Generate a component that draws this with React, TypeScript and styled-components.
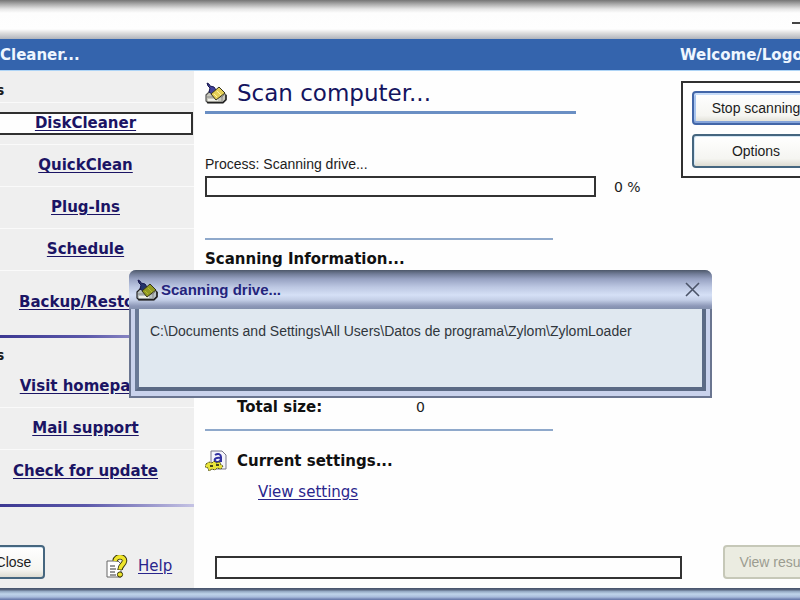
import React from "react";
import styled, { createGlobalStyle } from "styled-components";

const verdana = `"DejaVu Sans", sans-serif`;
const plain = `"Liberation Sans", sans-serif`;

const GlobalStyle = createGlobalStyle`
  *, *::before, *::after { box-sizing: border-box; }
  body { margin: 0; background: #fefefe; overflow: hidden; }
`;

const Viewport = styled.div`
  position: relative;
  min-height: 100vh;
  overflow: hidden;
  color: #1c1c1c;
  font: 14px/20px ${plain};
`;

const Shell = styled.div`
  display: flex;
  flex-direction: column;
  min-height: 100vh;
  margin: 0 -31px 0 -22px;
`;

const Caption = styled.header`
  display: flex;
  justify-content: flex-end;
  height: 39px;
  padding: 10px 22px;
  background: linear-gradient(#757575 0, #a9a9a9 4px, #e6e6e6 9px, #fdfdfd 13px, #fefefe 29px, #dedede 33px, #b0b4bc 39px);
`;

const CaptionButton = styled.button`
  display: flex;
  align-items: center;
  width: 17px;
  height: 26px;
  padding: 0;
  border: 0;
  background: none;
`;

const Banner = styled.div`
  display: flex;
  justify-content: space-between;
  align-items: center;
  height: 32px;
  padding: 0 0 0 22px;
  border-bottom: 1px solid #aed4f6;
  background: #3464ad;
  color: #eef6ff;
  font: bold 15px/20px ${verdana};
`;

const BannerLink = styled.span`
  width: 151px;
  white-space: nowrap;
`;

const Body = styled.div`
  flex: 1;
  display: flex;
`;

const Sidebar = styled.nav`
  display: flex;
  flex-direction: column;
  width: 216px;
  flex-shrink: 0;
  background: #efefef;
`;

const GroupTitle = styled.h2<{ $line?: boolean }>`
  display: flex;
  align-items: center;
  height: ${(p) => (p.$line ? 32 : 28)}px;
  margin: 0;
  padding: 6px 0 0 18px;
  border-bottom: ${(p) => (p.$line ? "1px solid #fafafa" : "0")};
  font: bold 14px/20px ${verdana};
`;

const NavItem = styled.div<{ $size?: "tall" | "last" }>`
  display: flex;
  align-items: center;
  justify-content: center;
  height: ${(p) => (p.$size === "tall" ? 64 : p.$size === "last" ? 54 : 42)}px;
  padding-bottom: ${(p) => (p.$size === "tall" ? "2px" : p.$size === "last" ? "12px" : "0")};
  border-bottom: ${(p) => (p.$size ? "0" : "1px solid #fafafa")};
`;

const NavLink = styled.a<{ $active?: boolean }>`
  width: 100%;
  margin-right: 1px;
  border: 2px solid ${(p) => (p.$active ? "#303030" : "transparent")};
  background: ${(p) => (p.$active ? "#fefefe" : "transparent")};
  color: #1b1464;
  font: bold 15px/19px ${verdana};
  text-align: center;
  text-underline-offset: 2px;
  white-space: nowrap;
`;

const GroupRule = styled.hr`
  width: 100%;
  height: 3px;
  margin: 0;
  border: 0;
  background: linear-gradient(90deg, #34308c, #5b58aa 50%, #c5c3e4);
`;

const SideFooter = styled.div`
  display: flex;
  align-items: center;
  margin-top: auto;
  padding: 0 0 9px;
`;

const HelpGroup = styled.div`
  display: flex;
  align-items: center;
  gap: 10px;
  margin: 8px 0 0 61px;
`;

const TextLink = styled.a`
  color: #29258c;
  font: 15px/20px ${verdana};
  text-underline-offset: 2px;
`;

const Button = styled.button<{ $focus?: boolean }>`
  height: 34px;
  padding: 0 12px;
  border: 2px solid ${(p) => (p.$focus ? "#4266a8" : "#45667f")};
  border-radius: 4px;
  background: linear-gradient(#ffffff, #f5f5f1 75%, #dddcd2);
  box-shadow: ${(p) => (p.$focus ? "inset 0 2px #c7dcf8, inset 0 -2px #85a4da, inset 2px 0 #a8c4ee" : "inset 1px 1px #d4e6f4")};
  color: #1c1c1c;
  font: 14px/20px ${plain};
  white-space: nowrap;
  &:disabled {
    width: 108px;
    border-color: #c6c8b8;
    background: #ebece1;
    box-shadow: none;
    color: #9b9c90;
  }
`;

const CloseButton = styled(Button)`
  width: 67px;
  padding: 0 0 0 4px;
`;

const Main = styled.main`
  flex: 1;
  min-width: 0;
  display: flex;
  flex-direction: column;
  padding: 10px 0 9px 11px;
`;

const TopRow = styled.div`
  display: flex;
  justify-content: space-between;
  align-items: flex-start;
`;

const ScanColumn = styled.section`
  flex: 1;
`;

const TitleBar = styled.div`
  display: flex;
  align-items: center;
  gap: 10px;
  width: 371px;
  height: 33px;
  padding-bottom: 6px;
  border-bottom: 3px solid #6a8fc4;
`;

const Title = styled.h1`
  margin: 0;
  color: #14145f;
  font: 23px/28px ${verdana};
`;

const ProcessLabel = styled.label`
  display: block;
  margin-top: 40px;
`;

const ProgressRow = styled.div`
  display: flex;
  align-items: center;
  gap: 18px;
  margin-top: 2px;
`;

const Bar = styled.div<{ $footer?: boolean }>`
  width: ${(p) => (p.$footer ? "467px" : "391px")};
  height: ${(p) => (p.$footer ? "23px" : "21px")};
  border: 2px solid #333;
  background: #fefefe;
`;

const Percent = styled.span`
  font: 14px/20px ${verdana};
`;

const ActionPanel = styled.aside`
  display: grid;
  gap: 8px;
  width: 150px;
  height: 97px;
  padding: 8px 9px;
  border: 2px solid #303030;
`;

const Rule = styled.hr`
  width: 348px;
  height: 2px;
  margin: 0;
  border: 0;
  background: #8fa9cb;
`;

const Heading = styled.h2`
  margin: 0;
  color: #111;
  font: bold 15px/20px ${verdana};
`;

const InfoBlock = styled.section`
  margin-top: 41px;
`;

const InfoTitle = styled(Heading)`
  margin-top: 9px;
`;

const TotalRow = styled.dl`
  display: flex;
  margin: 128px 0 12px 32px;
`;

const TotalLabel = styled.dt`
  width: 179px;
  font: bold 15px/20px ${verdana};
  color: #111;
`;

const TotalValue = styled.dd`
  margin: 0;
  font: 14px/20px ${verdana};
`;

const SettingsHead = styled.div`
  display: flex;
  align-items: center;
  gap: 10px;
  margin-top: 19px;
`;

const SettingsLink = styled.div`
  margin: 10px 0 0 53px;
`;

const MainFooter = styled.footer`
  display: flex;
  align-items: flex-end;
  justify-content: space-between;
  margin-top: auto;
  padding-left: 10px;
`;

const FrameBottom = styled.div`
  height: 12px;
  background: linear-gradient(#45526a 0, #5a6780 2px, #8ea3bd 3px, #bfd4ea 6px, #a9bddc 9px, #7486b4 11px, #6678a8);
`;

const Dialog = styled.div`
  position: absolute;
  top: 270px;
  left: 129px;
  width: 583px;
  border-radius: 7px 7px 0 0;
  background: #8a97bb;
  overflow: hidden;
`;

const DialogTitle = styled.div`
  display: flex;
  align-items: center;
  gap: 3px;
  height: 39px;
  padding: 0 12px 0 7px;
  background: linear-gradient(#4d586a 0, #727d98 4px, #97a2c2 9px, #bcc7e2 17px, #d5e0f6 25px, #c3cee6 30px, #8d98b8 36px, #8390ad);
`;

const DialogName = styled.strong`
  flex: 1;
  color: #24247c;
  font: bold 15px/20px ${plain};
`;

const DialogClose = styled.button`
  display: flex;
  padding: 0;
  border: 0;
  background: none;
`;

const DialogFrame = styled.div`
  padding: 0 4px 5px;
  border: 2px solid #6a7590;
  border-top: 0;
  background: #c9d2ec;
`;

const DialogBody = styled.div`
  height: 82px;
  padding: 12px 11px;
  border: solid #5b6a85;
  border-width: 0 4px 4px;
  border-left-color: #697996;
  background: #e0e8f0;
  color: #30363c;
  white-space: nowrap;
`;

function BroomIcon({ dark }: { dark?: boolean }) {
  return (
    <svg width="22" height="22" viewBox="0 0 22 22" aria-hidden="true">
      <path d="M1 13 5 9H17L21 13V18L18 21H3L1 19Z" fill={dark ? "#b9c2c4" : "#c8c8bc"} stroke={dark ? "#222" : "#555"} strokeWidth="1.2" />
      <path d="M2 20.5H18L21 17.5V13" fill="none" stroke="#222" strokeWidth="1.4" />
      <path d="M2 15H17L20 12M17 15V20" fill="none" stroke="#888" />
      <path d="M3 18H13" stroke="#efefe8" strokeWidth="2" />
      <path d="M2 1 4 2 5 4 9 5 11 8 7 12 4 10 5 6 3 4Z" fill={dark ? "#25356c" : "#41419c"} stroke="#17174e" />
      <path d="M6 12 14 5 20 11 11 18Z" fill={dark ? "#929b21" : "#e4cf58"} stroke="#34331c" />
      <path d="M9 12 12 15M12 9 16 13" stroke={dark ? "#b4ba33" : "#fff1a0"} />
    </svg>
  );
}

function HelpIcon() {
  return (
    <svg width="22" height="23" viewBox="0 0 22 23" aria-hidden="true">
      <path d="M1 6H12L15 9V22H1Z" fill="#fff" stroke="#666" />
      <path d="M4 11H9M4 14H10M4 17H9M4 20H10" stroke="#333" />
      <path d="M9 6C10 0 19 1 18.500 6 18 10 14 10 14 15" fill="none" stroke="#33320d" strokeWidth="5.500" />
      <path d="M9 6C10 0 19 1 18.500 6 18 10 14 10 14 14.500" fill="none" stroke="#eee42b" strokeWidth="3.600" />
      <circle cx="14" cy="19.500" r="2.600" fill="#eee42b" stroke="#33320d" />
    </svg>
  );
}

function SettingsIcon() {
  return (
    <svg width="22" height="22" viewBox="0 0 22 22" aria-hidden="true">
      <path d="M6 1H17L21 5V19H6Z" fill="#f4f4fb" stroke="#777788" />
      <path d="M10 5C13 3 16 4 16 7V12M16 8C11 7 9 9 10 11 12 13 15 12 16 9" fill="none" stroke="#3030a0" strokeWidth="2" />
      <path d="M1 14 4 12 7 13 9 11 11 13 15 12 16 15 18 16 16 19 12 18 10 20 7 19 4 21 3 18 0 17Z" fill="#e8e43a" stroke="#4f4d12" strokeDasharray="2 1" />
      <path d="M5 16H8M11 15H14" stroke="#444419" strokeWidth="2" />
    </svg>
  );
}

const tools = ["QuickClean", "Plug-Ins", "Schedule"];

export default function App() {
  return (
    <Viewport>
      <GlobalStyle />
      <Shell>
        <Caption>
          <CaptionButton aria-label="Minimize">
            <svg width="12" height="2"><path d="M0 1H12" stroke="#444" strokeWidth="2" /></svg>
          </CaptionButton>
        </Caption>
        <Banner>
          <span>Cleaner...</span>
          <BannerLink>Welcome/Logo</BannerLink>
        </Banner>
        <Body>
          <Sidebar>
            <GroupTitle $line>s</GroupTitle>
            <NavItem><NavLink href="#disk" $active>DiskCleaner</NavLink></NavItem>
            {tools.map((t) => (
              <NavItem key={t}><NavLink href={"#" + t}>{t}</NavLink></NavItem>
            ))}
            <NavItem $size="tall"><NavLink href="#backup">Backup/Restore</NavLink></NavItem>
            <GroupRule />
            <GroupTitle>s</GroupTitle>
            <NavItem><NavLink href="#home">Visit homepage</NavLink></NavItem>
            <NavItem><NavLink href="#mail">Mail support</NavLink></NavItem>
            <NavItem $size="last"><NavLink href="#update">Check for update</NavLink></NavItem>
            <GroupRule />
            <SideFooter>
              <CloseButton>Close</CloseButton>
              <HelpGroup><HelpIcon /><TextLink href="#help">Help</TextLink></HelpGroup>
            </SideFooter>
          </Sidebar>
          <Main>
            <TopRow>
              <ScanColumn>
                <TitleBar><BroomIcon /><Title>Scan computer...</Title></TitleBar>
                <ProcessLabel id="process">Process: Scanning drive...</ProcessLabel>
                <ProgressRow>
                  <Bar role="progressbar" aria-labelledby="process" aria-valuenow={0} />
                  <Percent>0 %</Percent>
                </ProgressRow>
              </ScanColumn>
              <ActionPanel>
                <Button $focus>Stop scanning</Button>
                <Button>Options</Button>
              </ActionPanel>
            </TopRow>
            <InfoBlock>
              <Rule />
              <InfoTitle>Scanning Information...</InfoTitle>
              <TotalRow><TotalLabel>Total size:</TotalLabel><TotalValue>0</TotalValue></TotalRow>
              <Rule />
            </InfoBlock>
            <SettingsHead><SettingsIcon /><Heading>Current settings...</Heading></SettingsHead>
            <SettingsLink><TextLink href="#settings">View settings</TextLink></SettingsLink>
            <MainFooter>
              <Bar $footer role="progressbar" aria-label="Total progress" aria-valuenow={0} />
              <Button disabled>View results</Button>
            </MainFooter>
          </Main>
        </Body>
        <FrameBottom />
      </Shell>
      <Dialog role="dialog" aria-labelledby="dialog-name">
        <DialogTitle>
          <BroomIcon dark />
          <DialogName id="dialog-name">Scanning drive...</DialogName>
          <DialogClose aria-label="Close dialog">
            <svg width="15" height="15" viewBox="0 0 15 15"><path d="M1 1 14 14M14 1 1 14" stroke="#4b5468" strokeWidth="1.600" /></svg>
          </DialogClose>
        </DialogTitle>
        <DialogFrame>
          <DialogBody>C:\Documents and Settings\All Users\Datos de programa\Zylom\ZylomLoader</DialogBody>
        </DialogFrame>
      </Dialog>
    </Viewport>
  );
}
